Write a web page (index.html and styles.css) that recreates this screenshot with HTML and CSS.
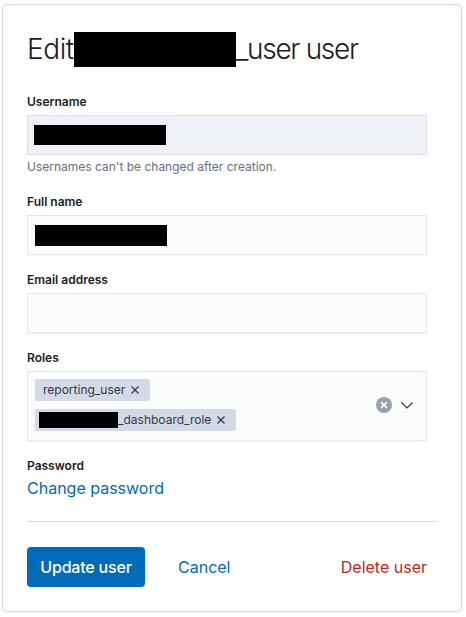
FILE: index.html
```html
<!DOCTYPE html>
<html>
<head>
<meta charset="utf-8">
<link rel="stylesheet" href="styles.css">
</head>
<body>
<div class="panel">
  <h1 class="title">Edit<span class="redact title-redact"></span><span class="title-rest">_user user</span></h1>

  <div class="row first">
    <label class="label">Username</label>
    <div class="input disabled"><span class="redact r-username"></span></div>
    <div class="help">Usernames can't be changed after creation.</div>
  </div>

  <div class="row">
    <label class="label">Full name</label>
    <div class="input"><span class="redact r-fullname"></span></div>
  </div>

  <div class="row">
    <label class="label">Email address</label>
    <div class="input"></div>
  </div>

  <div class="row">
    <label class="label">Roles</label>
    <div class="combo">
      <div class="chips">
        <span class="chip">reporting_user<svg class="chip-x" viewBox="0 0 8 8"><path d="M0.5 0.5 L7.5 7.5 M7.5 0.5 L0.5 7.5" /></svg></span>
        <span class="chip chip2"><span class="redact r-chip"></span>_dashboard_role<svg class="chip-x" viewBox="0 0 8 8"><path d="M0.5 0.5 L7.5 7.5 M7.5 0.5 L0.5 7.5" /></svg></span>
      </div>
      <div class="combo-icons">
        <svg class="clear" viewBox="0 0 16 16"><circle cx="8" cy="8" r="8" fill="#98a2b3"/><path d="M5.6 5.6 L10.4 10.4 M10.4 5.6 L5.6 10.4" stroke="#fff" stroke-width="1.6" stroke-linecap="round"/></svg>
        <svg class="chev" viewBox="0 0 12 7"><path d="M0.5 0.5 L6 6 L11.5 0.5" fill="none" stroke="#343741" stroke-width="1.2"/></svg>
      </div>
    </div>
  </div>

  <div class="row">
    <label class="label">Password</label>
    <a class="link">Change password</a>
  </div>

  <hr class="rule">

  <div class="actions">
    <button class="btn primary">Update user</button>
    <button class="btn empty">Cancel</button>
    <span class="spacer"></span>
    <button class="btn empty danger">Delete user</button>
  </div>
</div>
</body>
</html>
```

FILE: styles.css
```css
html, body {
  margin: 0;
  padding: 0;
  background: #ffffff;
}
body {
  padding: 4px 4px 5px 2px;
  font-family: Inter, "Noto Sans", sans-serif;
  color: #1a1c21;
}
.panel {
  width: 460px;
  box-sizing: border-box;
  border: 1px solid #d3dae6;
  border-radius: 5px;
  background: #fff;
  padding: 24px;
  box-shadow: 0 1px 2px rgba(0,0,0,0.08);
}
.title {
  margin: 0;
  font-size: 28px;
  font-weight: 300;
  line-height: 40px;
  color: #1a1c21;
  letter-spacing: -0.4px;
  white-space: nowrap;
}
.title-rest {
  letter-spacing: -1.3px;
}
.redact {
  display: inline-block;
  background: #000;
}
.title-redact {
  width: 162px;
  height: 35px;
  vertical-align: -8px;
}
.row {
  display: flex;
  flex-direction: column;
  align-items: flex-start;
  margin-top: 16px;
}
.row.first {
  margin-top: 24px;
}
.label {
  font-size: 12px;
  font-weight: 600;
  line-height: 18px;
  margin-bottom: 4px;
  color: #1a1c21;
}
.input {
  box-sizing: border-box;
  width: 400px;
  height: 40px;
  background: #fbfcfd;
  border: 1px solid #e4e8ee;
  box-shadow: 0 1px 1px rgba(0,0,0,0.04);
  display: flex;
  align-items: center;
  padding-left: 7px;
}
.input.disabled {
  background: #eef2f7;
  border-color: #d9dee7;
  box-shadow: none;
  padding-left: 6px;
}
.r-username { width: 132px; height: 20px; }
.r-fullname { width: 132px; height: 21px; }
.help {
  font-size: 12px;
  line-height: 16px;
  margin-top: 4px;
  color: #69707d;
}
.row.first + .row {
  margin-top: 18px;
}
.combo {
  box-sizing: border-box;
  width: 400px;
  min-height: 40px;
  background: #fbfcfd;
  border: 1px solid #e4e8ee;
  box-shadow: 0 1px 1px rgba(0,0,0,0.04);
  display: flex;
  align-items: center;
  padding: 7px 13px 9px 7px;
}
.chips {
  flex: 1;
  display: flex;
  flex-direction: column;
  align-items: flex-start;
  gap: 8px;
}
.chip {
  display: inline-flex;
  align-items: center;
  height: 22px;
  background: #d3dae6;
  border-radius: 3px;
  padding: 0 11px 0 8px;
  font-size: 12px;
  color: #343741;
  line-height: 22px;
}
.chip2 {
  padding-left: 4px;
}
.r-chip {
  width: 79px;
  height: 16px;
}
.chip-x {
  width: 8px;
  height: 8px;
  margin-left: 6px;
  stroke: #343741;
  stroke-width: 1.2;
}
.combo-icons {
  display: flex;
  align-items: center;
  gap: 9px;
}
.clear {
  width: 16px;
  height: 16px;
}
.chev {
  width: 12px;
  height: 7px;
}
.link {
  font-size: 16px;
  line-height: 24px;
  color: #006bb8;
  margin-top: -3px;
}
.rule {
  border: none;
  border-top: 1px solid #d3dae6;
  margin: 21px 0 25px;
  height: 0;
}
.actions {
  display: flex;
  align-items: center;
}
.btn {
  font-family: Inter, "Noto Sans", sans-serif;
  font-size: 16px;
  font-weight: 500;
  height: 40px;
  border: none;
  background: none;
  border-radius: 4px;
  cursor: pointer;
}
.primary {
  background: #006bb8;
  color: #fff;
  padding: 0 12px;
  min-width: 118px;
  letter-spacing: -0.2px;
}
.empty {
  color: #006bb8;
  font-weight: 400;
  padding: 0 8px;
  margin-left: 25px;
}
.spacer {
  flex: 1;
}
.danger {
  color: #bd271e;
  margin-left: 0;
  margin-right: 2px;
}
```
